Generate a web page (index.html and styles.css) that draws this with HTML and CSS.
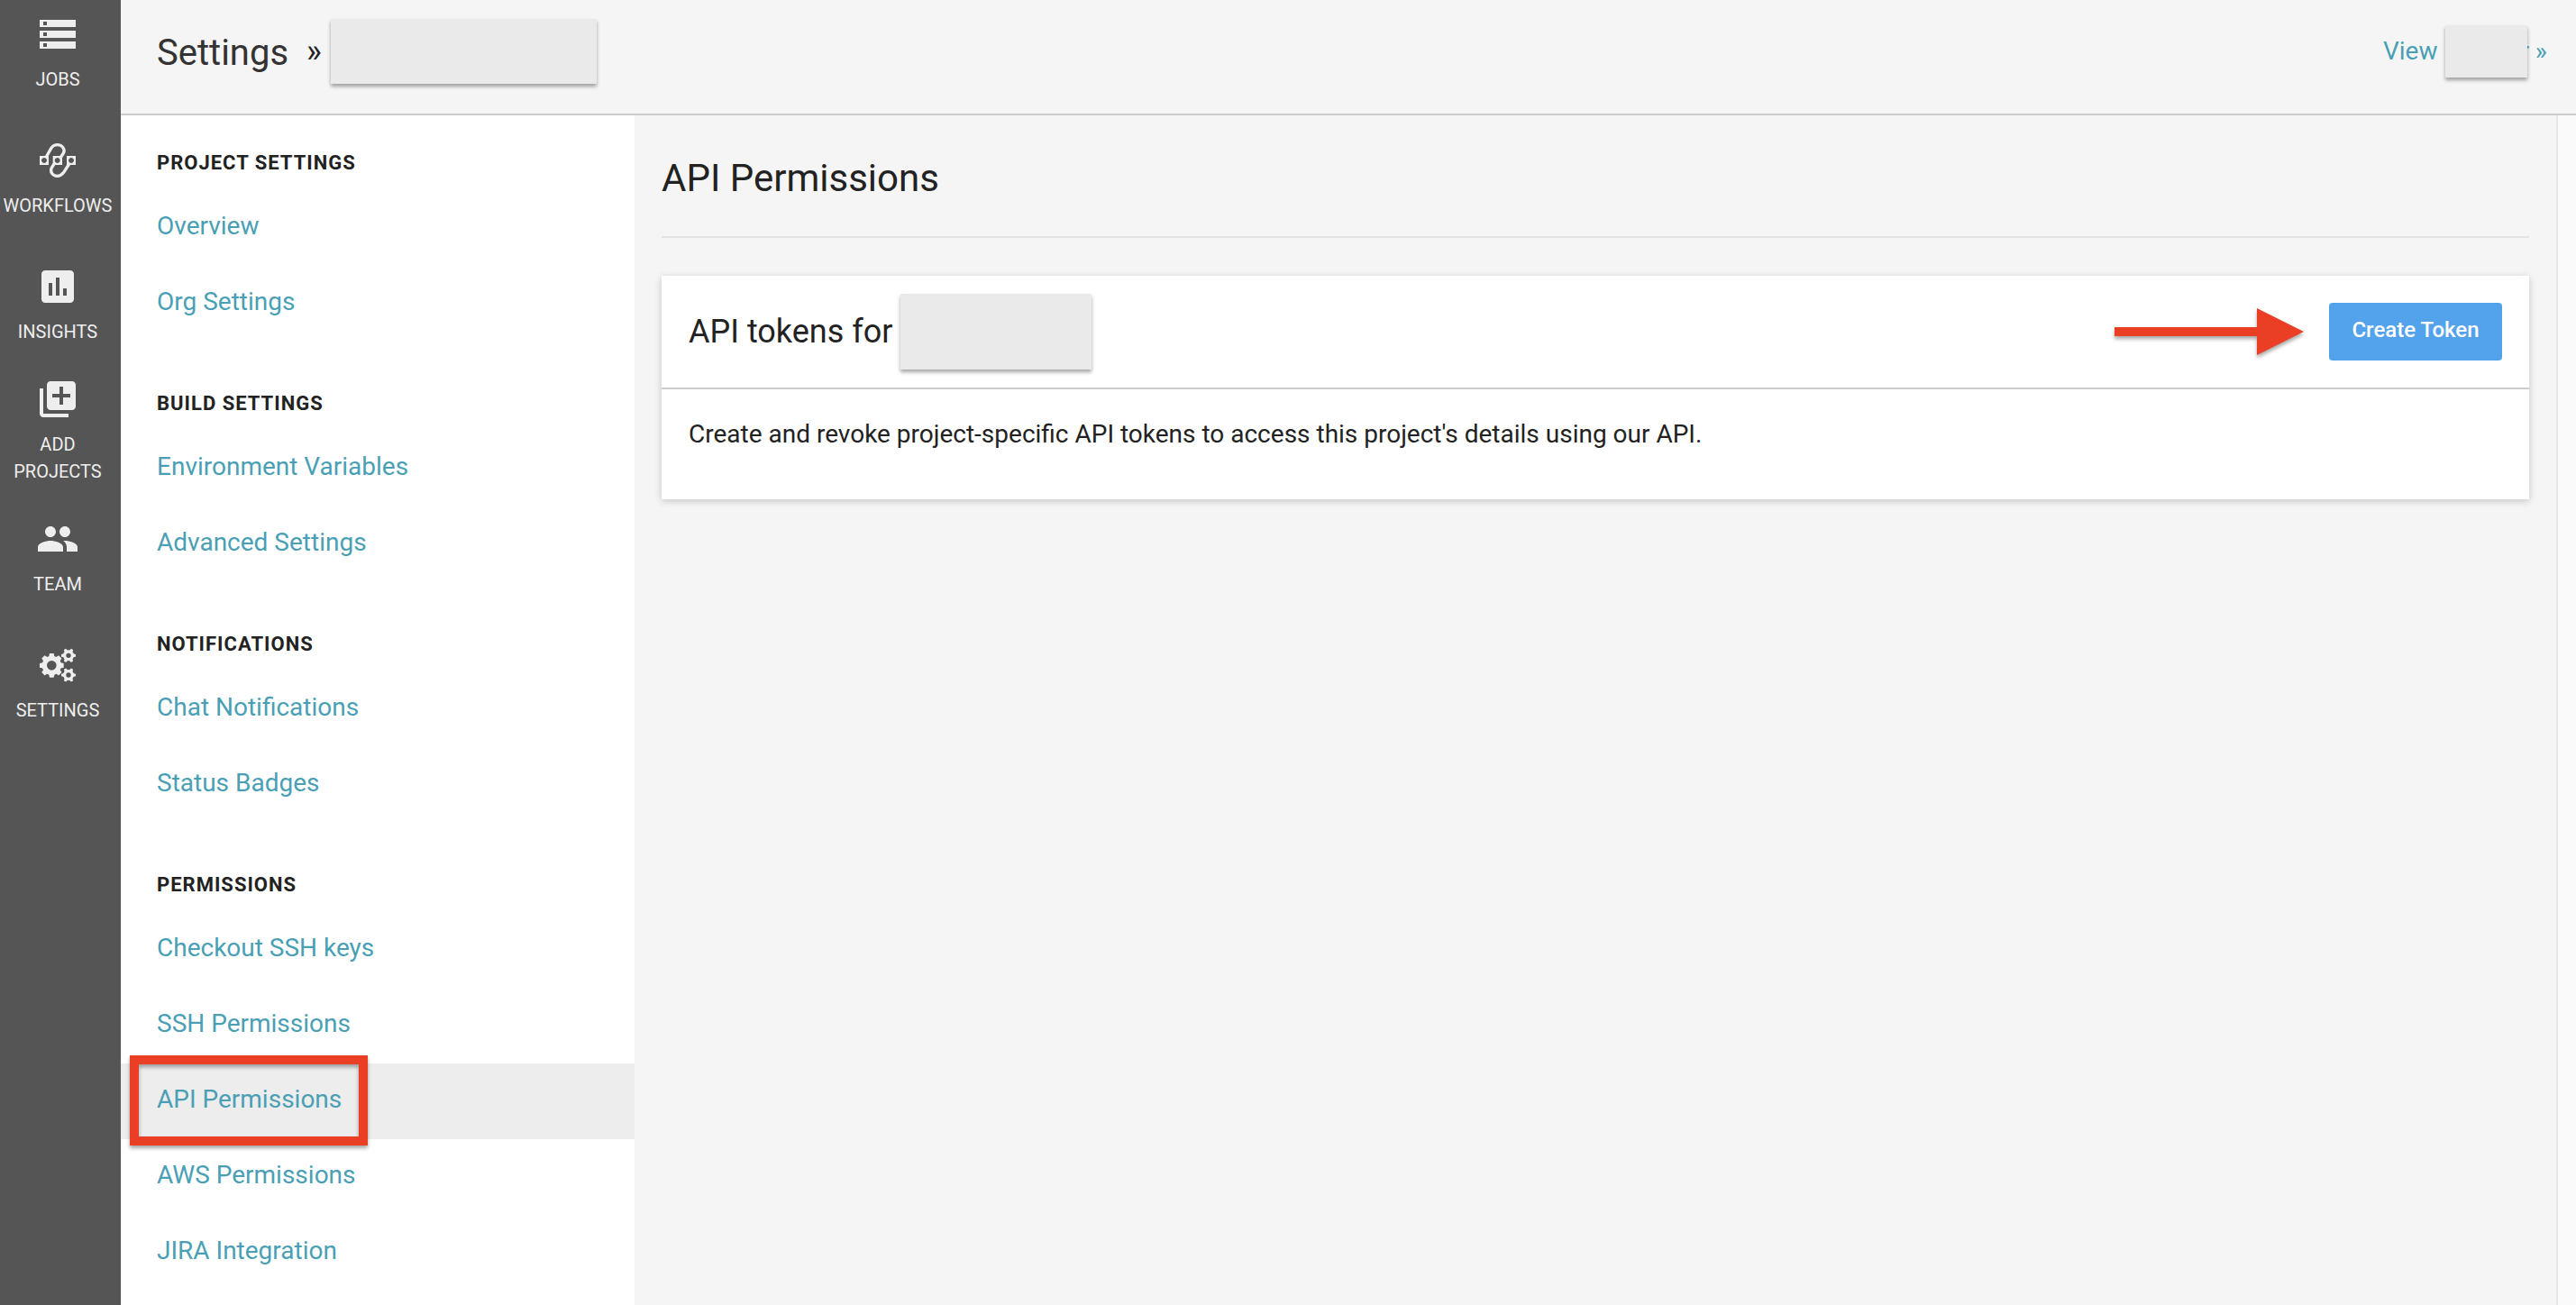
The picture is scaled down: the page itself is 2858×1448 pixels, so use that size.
FILE: index.html
```
<!DOCTYPE html>
<html lang="en">
<head>
<meta charset="utf-8">
<title>Settings - API Permissions</title>
<meta name="viewport" content="width=device-width, initial-scale=1">
<link rel="stylesheet" href="styles.css">
</head>
<body>
<div class="app">
  <nav class="rail" aria-label="Main">
    <a class="rail-item" href="#jobs">
      <svg class="rail-icon" viewBox="0 0 24 24" aria-hidden="true"><path d="M2 20h20v-4H2v4zm2-3h2v2H4v-2zM2 4v4h20V4H2zm4 3H4V5h2v2zm-4 7h20v-4H2v4zm2-3h2v2H4v-2z"/></svg>
      <span>JOBS</span>
    </a>
    <a class="rail-item" href="#workflows">
      <svg class="rail-icon" viewBox="0 0 144 144" aria-hidden="true">
        <path fill-rule="evenodd" d="M12 57h30v30H12zM27 63a9 9 0 1 0 .1 0zM56 57h31v30H56zM71 63a9 9 0 1 0 .1 0zM102 57h30v30h-30zM117 63a9 9 0 1 0 .1 0z"/>
        <path class="stroke" d="M34 60L50 32C56 22 62 20 71 20C88 20 98 36 91 48L83 60M60 84L52 96C45 110 55 124 71 124C80 124 86 120 92 112L110 84"/>
      </svg>
      <span>WORKFLOWS</span>
    </a>
    <a class="rail-item" href="#insights">
      <svg class="rail-icon" viewBox="0 0 24 24" aria-hidden="true"><path d="M19 3H5c-1.100 0-2 .9-2 2v14c0 1.100.9 2 2 2h14c1.100 0 2-.9 2-2V5c0-1.100-.9-2-2-2zM9 17H7v-7h2v7zm4 0h-2V7h2v10zm4 0h-2v-4h2v4z"/></svg>
      <span>INSIGHTS</span>
    </a>
    <a class="rail-item" href="#add-projects">
      <svg class="rail-icon" viewBox="0 0 24 24" aria-hidden="true"><path d="M4 6H2v14c0 1.100.9 2 2 2h14v-2H4V6zm16-4H8c-1.100 0-2 .9-2 2v12c0 1.100.9 2 2 2h12c1.100 0 2-.9 2-2V4c0-1.100-.9-2-2-2zm-1 9h-4v4h-2v-4H9V9h4V5h2v4h4v2z"/></svg>
      <span>ADD PROJECTS</span>
    </a>
    <a class="rail-item" href="#team">
      <svg class="rail-icon" viewBox="0 0 24 24" aria-hidden="true"><path d="M16 11c1.660 0 2.990-1.340 2.990-3S17.660 5 16 5c-1.660 0-3 1.340-3 3s1.340 3 3 3zm-8 0c1.660 0 2.990-1.340 2.990-3S9.660 5 8 5C6.340 5 5 6.340 5 8s1.340 3 3 3zm0 2c-2.330 0-7 1.170-7 3.500V19h14v-2.500c0-2.330-4.670-3.500-7-3.500zm8 0c-.29 0-.62.020-.97.050 1.160.84 1.970 1.970 1.970 3.450V19h6v-2.500c0-2.330-4.670-3.500-7-3.500z"/></svg>
      <span>TEAM</span>
    </a>
    <a class="rail-item" href="#settings">
      <svg class="rail-icon" viewBox="-72 -71 144 144" aria-hidden="true">
        <defs>
          <path id="tooth" d="M-7 -40h14l3 14h-20z"/>
          <path id="cog" d="M-4 -24h8l2 9h-12z"/>
        </defs>
        <g transform="translate(-20 2)">
          <circle class="ring" r="24" stroke-width="16"/>
          <use href="#tooth"/><use href="#tooth" transform="rotate(45)"/><use href="#tooth" transform="rotate(90)"/><use href="#tooth" transform="rotate(135)"/><use href="#tooth" transform="rotate(180)"/><use href="#tooth" transform="rotate(225)"/><use href="#tooth" transform="rotate(270)"/><use href="#tooth" transform="rotate(315)"/>
        </g>
        <g transform="translate(36 -31)">
          <circle class="ring" r="13" stroke-width="10"/>
          <use href="#cog" transform="rotate(30)"/><use href="#cog" transform="rotate(90)"/><use href="#cog" transform="rotate(150)"/><use href="#cog" transform="rotate(210)"/><use href="#cog" transform="rotate(270)"/><use href="#cog" transform="rotate(330)"/>
        </g>
        <g transform="translate(36 34)">
          <circle class="ring" r="13" stroke-width="10"/>
          <use href="#cog" transform="rotate(30)"/><use href="#cog" transform="rotate(90)"/><use href="#cog" transform="rotate(150)"/><use href="#cog" transform="rotate(210)"/><use href="#cog" transform="rotate(270)"/><use href="#cog" transform="rotate(330)"/>
        </g>
      </svg>
      <span>SETTINGS</span>
    </a>
  </nav>

  <div class="page">
    <header class="topbar">
      <div class="crumbs">
        <span class="crumb-title">Settings</span>
        <span class="crumb-sep">»</span>
        <span class="mask mask-project"></span>
      </div>
      <a class="view-link" href="#view"><span>View</span><span class="mask mask-view"></span><span>r »</span></a>
    </header>

    <div class="columns">
      <aside class="sidebar">
        <section class="group">
          <h2 class="group-title">PROJECT SETTINGS</h2>
          <a class="side-link" href="#overview">Overview</a>
          <a class="side-link" href="#org">Org Settings</a>
        </section>
        <section class="group">
          <h2 class="group-title">BUILD SETTINGS</h2>
          <a class="side-link" href="#env">Environment Variables</a>
          <a class="side-link" href="#advanced">Advanced Settings</a>
        </section>
        <section class="group">
          <h2 class="group-title">NOTIFICATIONS</h2>
          <a class="side-link" href="#chat">Chat Notifications</a>
          <a class="side-link" href="#badges">Status Badges</a>
        </section>
        <section class="group">
          <h2 class="group-title">PERMISSIONS</h2>
          <a class="side-link" href="#checkout">Checkout SSH keys</a>
          <a class="side-link" href="#ssh">SSH Permissions</a>
          <a class="side-link is-active" href="#api" aria-current="page">API Permissions<span class="callout"></span></a>
          <a class="side-link" href="#aws">AWS Permissions</a>
          <a class="side-link" href="#jira">JIRA Integration</a>
        </section>
      </aside>

      <main class="main">
        <h1 class="main-title">API Permissions</h1>
        <section class="card">
          <div class="card-head">
            <h2 class="card-title">API tokens for</h2>
            <span class="mask mask-name"></span>
            <svg class="arrow" viewBox="0 0 210 52" aria-hidden="true"><path d="M0 21h158V0l52 26-52 26V31H0z"/></svg>
            <button class="button" type="button">Create Token</button>
          </div>
          <p class="card-body">Create and revoke project-specific API tokens to access this project's details using our API.</p>
        </section>
      </main>
      <div class="edge"></div>
    </div>
  </div>
</div>
</body>
</html>
```
FILE: styles.css
```
* { box-sizing: border-box; }

body {
  margin: 0;
  background: #f5f5f5;
  color: #222;
  font-family: Roboto, "Liberation Sans", sans-serif;
  font-size: 28px;
  line-height: 40px;
}

h1, h2, p { margin: 0; font-weight: 400; }

a { color: #4a9fb5; text-decoration: none; }

.app { display: flex; min-height: 100vh; }

/* Left icon rail */
.rail {
  display: flex;
  flex: none;
  flex-direction: column;
  gap: 51px;
  width: 134px;
  padding: 14px 6px 0 0;
  background: #555;
}

.rail-item {
  display: flex;
  flex-direction: column;
  align-items: center;
  justify-content: center;
  gap: 11px;
  height: 89px;
  color: #eee;
  font-size: 20px;
  line-height: 30px;
  text-align: center;
}

.rail-icon { flex: none; width: 48px; height: 48px; fill: #eee; }
.rail-icon .stroke { fill: none; stroke: #eee; stroke-width: 10; }
.rail-icon .ring { fill: none; stroke: #eee; }

.page { display: flex; flex: 1; flex-direction: column; min-width: 0; }

/* Top bar */
.topbar {
  display: flex;
  align-items: center;
  justify-content: space-between;
  height: 128px;
  padding: 0 32px 12px 40px;
  border-bottom: 2px solid #ccc;
}

.crumbs { display: flex; align-items: center; }
.crumb-title { padding-top: 4px; color: #333; font-size: 40px; }
.crumb-sep { margin: 0 10px 0 20px; font-size: 36px; }

.mask {
  position: relative;
  flex: none;
  background: #eaeaea;
  box-shadow: 0 3px 4px rgba(0, 0, 0, .35);
}

.mask-project { width: 295px; height: 72px; }
.mask-view { width: 91px; height: 58px; margin: 0 -8px 0 9px; }
.mask-name { width: 212px; height: 84px; margin-left: 8px; }

.view-link { display: flex; align-items: center; }

.columns { display: flex; flex: 1; }

/* Settings menu */
.sidebar { flex: none; width: 570px; background: #fff; }

.group { padding-bottom: 16px; }

.group-title {
  padding: 33px 40px 10px;
  font-size: 22px;
  font-weight: 700;
  line-height: 40px;
  letter-spacing: 1px;
}

.side-link {
  position: relative;
  display: block;
  padding: 20px 40px 24px;
}

.is-active { background: #ededed; }

.callout {
  position: absolute;
  top: -9px;
  left: 10px;
  width: 264px;
  height: 100px;
  border: 10px solid #eb3f25;
  box-shadow: 0 3px 4px rgba(0, 0, 0, .35), inset 0 3px 4px rgba(0, 0, 0, .35);
}

/* Content */
.main { flex: 1; min-width: 0; padding: 0 30px; }

.main-title {
  padding: 41px 0 35px;
  border-bottom: 2px solid #e3e3e3;
  font-size: 42px;
  line-height: 58px;
}

.card {
  margin-top: 42px;
  background: #fff;
  box-shadow: 0 2px 8px rgba(0, 0, 0, .2);
}

.card-head {
  display: flex;
  align-items: center;
  height: 126px;
  padding: 0 30px;
  border-bottom: 2px solid #ccc;
}

.card-title { font-size: 36px; }

.arrow {
  width: 210px;
  height: 52px;
  margin: 0 28px 0 auto;
  fill: #eb3f25;
  filter: drop-shadow(0 3px 2px rgba(0, 0, 0, .35));
}

.button {
  width: 192px;
  height: 64px;
  padding: 0 0 4px;
  border: 0;
  border-radius: 4px;
  background: #53a2ec;
  color: #fff;
  font: 500 24px/28px Roboto, "Liberation Sans", sans-serif;
}

.card-body { padding: 30px 30px 52px; }

.edge { flex: none; width: 22px; border-left: 2px solid #e6e6e6; background: #fafafa; }
```
